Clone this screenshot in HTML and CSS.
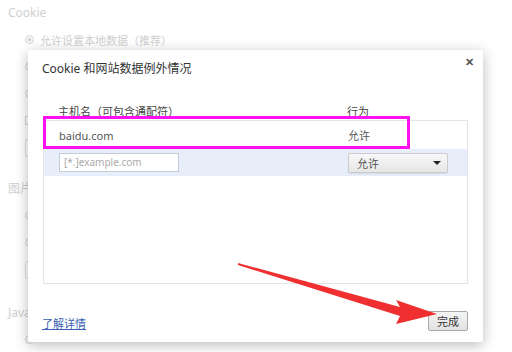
FILE: index.html
```html
<!DOCTYPE html>
<html lang="zh-CN">
<head>
  <meta charset="UTF-8" />
  <title>Cookie 和网站数据例外情况</title>
  <link rel="stylesheet" href="styles.css">
</head>
<body>
  <div class="settings">
    <div class="section-title">Cookie</div>
    <div class="opt"><span class="radio on"></span>允许设置本地数据（推荐）</div>
    <div class="opt"><span class="radio"></span></div>
    <div class="opt"><span class="radio"></span></div>
    <div class="opt"><span class="check"></span></div>
    <div class="opt"><span class="btn-ghost"></span></div>

    <div class="section-title pics">图片</div>
    <div class="opt"><span class="radio on"></span></div>
    <div class="opt"><span class="radio"></span></div>
    <div class="opt"><span class="btn-ghost"></span></div>

    <div class="section-title java">Java</div>
    <div class="opt"><span class="radio on"></span></div>
  </div>

  <div class="dialog" role="dialog">
    <div class="dialog-head">
      <span class="dialog-title">Cookie 和网站数据例外情况</span>
      <span class="close">&#x2715;</span>
    </div>

    <div class="table-head">
      <span class="col-host">主机名（可包含通配符）</span>
      <span class="col-act">行为</span>
    </div>
    <div class="table">
      <div class="row">
        <span class="col-host">baidu.com</span>
        <span class="col-act">允许</span>
      </div>
      <div class="row new">
        <span class="col-host"><span class="host-input">[*.]example.com</span></span>
        <span class="col-act">
          <span class="select">允许<span class="caret"></span></span>
        </span>
      </div>
    </div>

    <div class="dialog-foot">
      <a class="more" href="#">了解详情</a>
      <span class="done">完成</span>
    </div>
  </div>

  <div class="mark"></div>

  <svg class="arrow" width="512" height="352" viewBox="0 0 512 352">
    <polygon points="238,263 400,307 396,300 437,314 396,324 400,316 238,265" fill="#f03030"/>
  </svg>
</body>
</html>
```

FILE: styles.css
```css
html, body {
  margin: 0;
  padding: 0;
  height: 100%;
  background: #fff;
  font-family: "Noto Sans", "Noto Sans CJK SC", sans-serif;
  overflow: hidden;
}

.settings {
  padding: 4px 8px;
  color: #cfcfcf;
  font-size: 11px;
}

.section-title {
  font-size: 12px;
  height: 22px;
  line-height: 18px;
}

.section-title.pics {
  margin-top: 19px;
}

.section-title.java {
  margin-top: 21px;
}

.opt {
  display: flex;
  align-items: center;
  gap: 6px;
  height: 27px;
  padding-left: 17px;
}

.radio {
  width: 9px;
  height: 9px;
  border: 1px solid #d8d8d8;
  border-radius: 50%;
  box-sizing: border-box;
  position: relative;
  background: #f6f6f6;
}

.radio.on::after {
  content: "";
  position: absolute;
  left: 2px;
  top: 2px;
  width: 3px;
  height: 3px;
  border-radius: 50%;
  background: #cfcfcf;
}

.check {
  width: 9px;
  height: 9px;
  border: 1px solid #d8d8d8;
  box-sizing: border-box;
}

.btn-ghost {
  width: 60px;
  height: 16px;
  border: 1px solid #e2e2e2;
  border-radius: 2px;
}

.dialog {
  position: absolute;
  left: 28px;
  top: 50px;
  width: 455px;
  height: 292px;
  background: #fff;
  border-radius: 2px;
  box-shadow: 0 3px 14px rgba(0, 0, 0, 0.28);
  display: flex;
  flex-direction: column;
  color: #333;
  font-size: 11px;
}

.dialog-head {
  display: flex;
  justify-content: space-between;
  align-items: flex-start;
  padding: 10px 9px 0 14px;
  height: 44px;
  box-sizing: border-box;
}

.dialog-title {
  font-size: 12px;
  color: #333;
  line-height: 18px;
}

.close {
  font-size: 11px;
  color: #555;
  font-weight: bold;
  line-height: 10px;
  margin-top: -3px;
}

.table-head {
  display: flex;
  margin: 10px 15px 0 15px;
  height: 16px;
  line-height: 12px;
  color: #444;
}

.col-host {
  width: 304px;
  padding-left: 15px;
  box-sizing: border-box;
  display: flex;
  align-items: center;
}

.col-act {
  display: flex;
  align-items: center;
}

.table {
  margin: 0 15px;
  height: 164px;
  border: 1px solid #e4e4e4;
  box-sizing: border-box;
  color: #555;
}

.row {
  display: flex;
  height: 28px;
}

.row.new {
  height: 27px;
  background: #e8eef9;
}

.host-input {
  width: 120px;
  height: 19px;
  border: 1px solid #c4ccd8;
  background: #fff;
  color: #aaa;
  padding-left: 4px;
  box-sizing: border-box;
  line-height: 17px;
  font-size: 10px;
}

.select {
  width: 100px;
  height: 20px;
  border: 1px solid #cbcbcb;
  border-radius: 2px;
  background: linear-gradient(#f8f8f8, #e6e6e6);
  box-sizing: border-box;
  display: flex;
  align-items: center;
  justify-content: space-between;
  padding: 0 6px 0 8px;
  color: #555;
  box-shadow: 0 1px 1px rgba(0, 0, 0, 0.08);
}

.caret {
  width: 0;
  height: 0;
  border-left: 4px solid transparent;
  border-right: 4px solid transparent;
  border-top: 4px solid #222;
}

.dialog-foot {
  display: flex;
  justify-content: space-between;
  align-items: center;
  margin-top: auto;
  padding: 0 15px 11px 14px;
}

.more {
  color: #3a5fb5;
  text-decoration: underline;
  font-size: 11px;
  margin-top: 4px;
}

.done {
  width: 40px;
  height: 20px;
  border: 1px solid #a8a8a8;
  border-radius: 2px;
  background: linear-gradient(#f4f4f4, #e2e2e2);
  box-sizing: border-box;
  display: flex;
  align-items: center;
  justify-content: center;
  color: #333;
  font-size: 11px;
}

.mark {
  position: absolute;
  left: 43px;
  top: 116px;
  width: 367px;
  height: 33px;
  border: 3px solid #ff10f0;
  box-sizing: border-box;
}

.arrow {
  position: absolute;
  left: 0;
  top: 0;
  pointer-events: none;
}
```
